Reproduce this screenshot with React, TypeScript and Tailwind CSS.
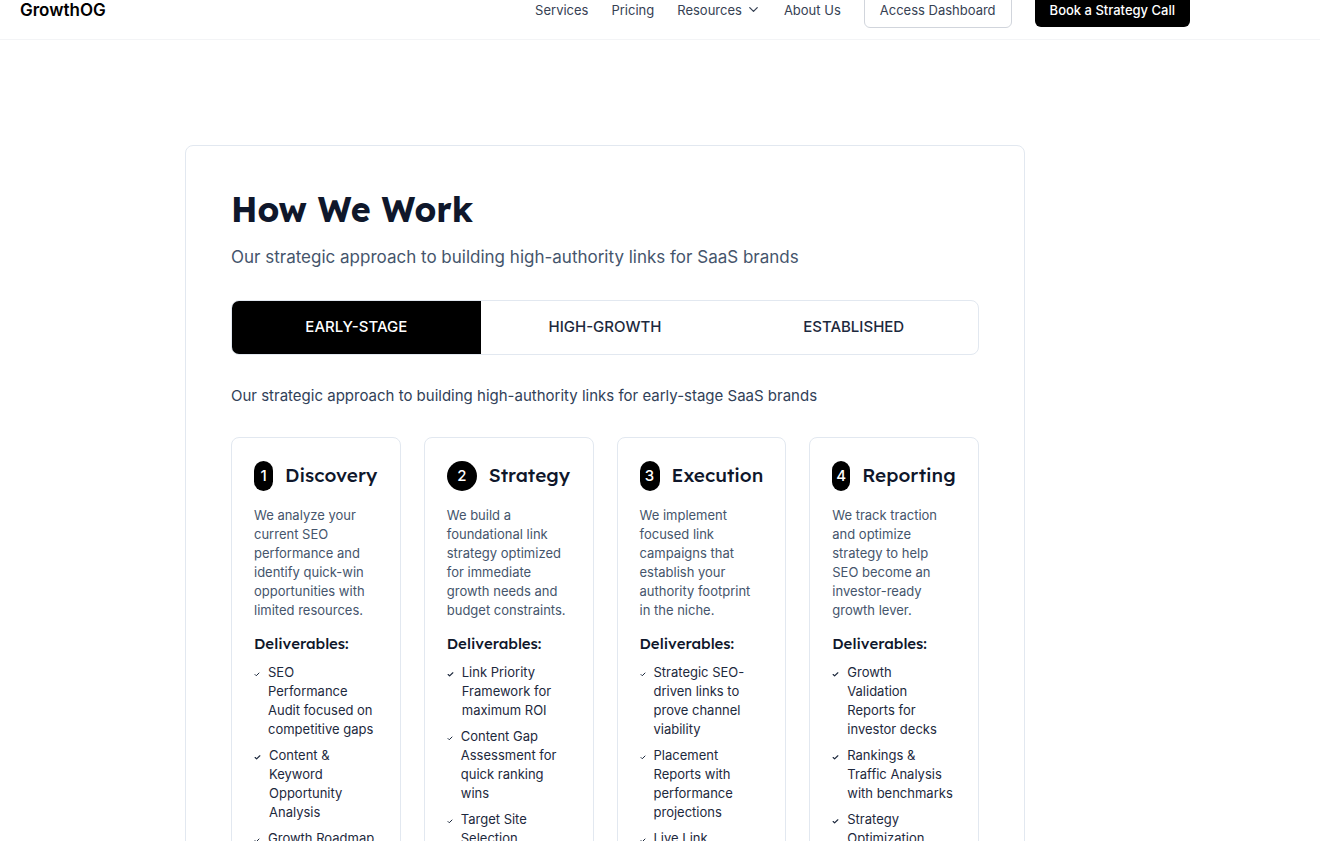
import { useState } from "react";
import { ChevronDown } from "lucide-react";

type Deliverable = { text: string; check: string };
type Step = { title: string; badge: string; body: string; items: Deliverable[] };

const NARROW = "w-[6px]";
const WIDE = "w-[7px]";

const tabs = ["EARLY-STAGE", "HIGH-GROWTH", "ESTABLISHED"];

const steps: Step[] = [
  {
    title: "Discovery",
    badge: "w-[19px]",
    body: "We analyze your current SEO performance and identify quick-win opportunities with limited resources.",
    items: [
      { text: "SEO Performance Audit focused on competitive gaps", check: NARROW },
      { text: "Content & Keyword Opportunity Analysis", check: WIDE },
      { text: "Growth Roadmap", check: NARROW },
    ],
  },
  {
    title: "Strategy",
    badge: "w-[30px]",
    body: "We build a foundational link strategy optimized for immediate growth needs and budget constraints.",
    items: [
      { text: "Link Priority Framework for maximum ROI", check: WIDE },
      { text: "Content Gap Assessment for quick ranking wins", check: NARROW },
      { text: "Target Site Selection", check: NARROW },
    ],
  },
  {
    title: "Execution",
    badge: "w-[20px]",
    body: "We implement focused link campaigns that establish your authority footprint in the niche.",
    items: [
      { text: "Strategic SEO-driven links to prove channel viability", check: NARROW },
      { text: "Placement Reports with performance projections", check: NARROW },
      { text: "Live Link", check: NARROW },
    ],
  },
  {
    title: "Reporting",
    badge: "w-[18px]",
    body: "We track traction and optimize strategy to help SEO become an investor-ready growth lever.",
    items: [
      { text: "Growth Validation Reports for investor decks", check: WIDE },
      { text: "Rankings & Traffic Analysis with benchmarks", check: WIDE },
      { text: "Strategy Optimization", check: WIDE },
    ],
  },
];

function Header() {
  return (
    <header className="-mt-5 flex h-[60px] items-center justify-between border-b border-gray-100 pr-[130px] pl-5">
      <a href="#" className="text-[17px] leading-6 font-semibold text-black">GrowthOG</a>
      <nav className="flex items-center gap-[23px] text-[13px] leading-5 text-gray-700">
        <a href="#services">Services</a>
        <a href="#pricing">Pricing</a>
        <button type="button" className="flex items-center gap-1">
          Resources
          <ChevronDown className="size-[15px]" />
        </button>
        <a href="#about">About Us</a>
        <a href="#dashboard" className="rounded-md border border-gray-300 px-[15px] py-[7px]">Access Dashboard</a>
        <a href="#call" className="rounded-md bg-black px-[15px] py-[7px] font-medium text-white">Book a Strategy Call</a>
      </nav>
    </header>
  );
}

function StepCard({ step, index }: { step: Step; index: number }) {
  return (
    <article className="rounded-lg border border-slate-200 px-[22px] pt-[23px] pb-6">
      <div className="flex items-center gap-3">
        <span className={`flex h-[30px] shrink-0 items-center justify-center rounded-full bg-black text-[15px] leading-6 font-medium text-white ${step.badge}`}>
          {index + 1}
        </span>
        <h3 className="pb-0.5 font-['Lexend','Inter',sans-serif] text-[19px] leading-6 font-medium text-slate-900">{step.title}</h3>
      </div>
      <p className="mt-[15px] text-[13px] leading-[19px] text-slate-600">{step.body}</p>
      <h4 className="mt-3 font-['Lexend','Inter',sans-serif] text-[15px] leading-[23px] font-medium text-slate-900">Deliverables:</h4>
      <ul className="mt-2 flex flex-col gap-[7px] pr-[2px] text-[13px] leading-[19px] text-slate-800">
        {step.items.map((item) => (
          <li key={item.text} className="flex items-start gap-2">
            <svg viewBox="0 0 24 24" fill="none" stroke="currentColor" strokeWidth="4" strokeLinecap="round" strokeLinejoin="round" aria-hidden="true" className={`mt-1 h-[15px] shrink-0 ${item.check}`}>
              <path d="M20 6 9 17l-5-5" />
            </svg>
            <span>{item.text}</span>
          </li>
        ))}
      </ul>
    </article>
  );
}

export default function App() {
  const [active, setActive] = useState(0);
  return (
    <div className="flex min-h-screen flex-col bg-white font-['Inter',sans-serif]">
      <Header />
      <main className="pt-[105px] pr-[110px]">
        <section className="mx-auto max-w-[840px] rounded-lg border border-slate-200 p-[45px]">
          <h2 className="font-['Lexend','Inter',sans-serif] text-[34px] leading-[38px] font-bold text-slate-900">How We Work</h2>
          <p className="mt-[15px] text-[17px] leading-[26px] text-slate-600">
            Our strategic approach to building high-authority links for SaaS brands
          </p>
          <div role="tablist" className="mt-[30px] grid grid-cols-3 overflow-hidden rounded-lg border border-slate-200">
            {tabs.map((tab, i) => (
              <button
                key={tab}
                type="button"
                role="tab"
                aria-selected={active === i}
                onClick={() => setActive(i)}
                className={`pt-[14px] pb-4 text-[15px] leading-[23px] font-medium ${active === i ? "bg-black text-white" : "text-slate-800"}`}
              >
                {tab}
              </button>
            ))}
          </div>
          <p className="mt-[30px] text-[15px] leading-[22px] text-slate-700">
            Our strategic approach to building high-authority links for early-stage SaaS brands
          </p>
          <div className="mt-[30px] grid grid-cols-4 gap-[23px]">
            {steps.map((step, i) => (
              <StepCard key={step.title} step={step} index={i} />
            ))}
          </div>
        </section>
      </main>
    </div>
  );
}
